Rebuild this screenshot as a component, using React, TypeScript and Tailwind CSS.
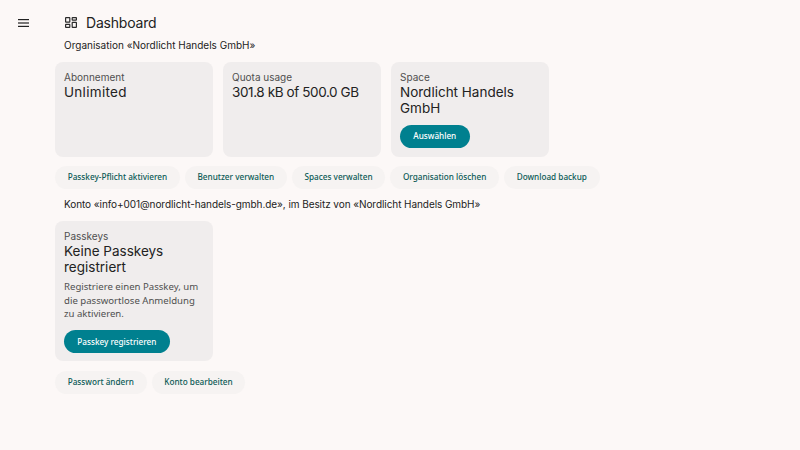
import React from 'react';

const heading = "font-['Inter','Noto_Sans',sans-serif]";
const body = "font-['Noto_Sans','Liberation_Sans',sans-serif]";

const Pill = ({ label }: { label: string }) => (
  <button className={`h-[23px] px-[12.7px] rounded-full bg-[#f6f3f2] text-[8.2px] font-medium text-[#0b5a55] whitespace-nowrap ${body}`}>
    {label}
  </button>
);

const Primary = ({ label }: { label: string }) => (
  <button className={`h-[23px] px-[13.3px] rounded-full bg-[#00808f] text-[8.2px] font-medium text-white whitespace-nowrap ${body}`}>
    {label}
  </button>
);

const Card = ({ label, title, children, titleClass = '' }: { label: string; title: string; children?: React.ReactNode; titleClass?: string }) => (
  <div className="w-[158px] rounded-[8px] bg-[#f0eded] p-[9px] pt-[8px]">
    <div className={`text-[10px] leading-[14px] text-[#4f4f4f] ${heading}`}>{label}</div>
    <div className={`text-[13.5px] leading-[16px] text-[#222] ${heading} ${titleClass}`}>{title}</div>
    {children}
  </div>
);

const MenuIcon = () => (
  <svg width="11" height="8" viewBox="0 0 11 8" fill="#222">
    <rect x="0" y="0" width="11" height="1.2" />
    <rect x="0" y="3.4" width="11" height="1.2" />
    <rect x="0" y="6.8" width="11" height="1.2" />
  </svg>
);

const DashboardIcon = () => (
  <svg width="12" height="11" viewBox="0 0 12 11" fill="none" stroke="#2b2b2b" strokeWidth="1.2">
    <rect x="0.6" y="0.6" width="4.2" height="4.6" rx="0.4" />
    <rect x="7.2" y="0.6" width="4.2" height="2.6" rx="0.4" />
    <rect x="0.6" y="7.4" width="4.2" height="3" rx="0.4" />
    <rect x="7.2" y="5.4" width="4.2" height="5" rx="0.4" />
  </svg>
);

export default function App() {
  return (
    <div className="w-[800px] h-[450px] overflow-hidden bg-[#fcf8f7] flex">
      <div className="w-[55px] pl-[17.5px] pt-[19px]">
        <MenuIcon />
      </div>
      <main className="flex-1">
        <div className="h-[45px] pl-[10px] flex items-center gap-[9px]">
          <DashboardIcon />
          <h1 className={`text-[14px] tracking-[-0.2px] text-[#222] ${heading}`}>Dashboard</h1>
        </div>
        <div className={`pl-[9px] text-[10px] leading-[14px] -mt-[7px] text-[#222] ${heading}`}>
          Organisation «Nordlicht Handels GmbH»
        </div>
        <div className="flex gap-[10px] mt-[10px] h-[95px]">
          <Card label="Abonnement" title="Unlimited" titleClass="tracking-[0.3px]" />
          <Card label="Quota usage" title="301.8 kB of 500.0 GB" titleClass="tracking-[-0.4px]" />
          <Card label="Space" title="Nordlicht Handels GmbH">
            <div className="mt-[5px]">
              <Primary label="Auswählen" />
            </div>
          </Card>
        </div>
        <div className="flex gap-[5px] mt-[9px]">
          <Pill label="Passkey-Pflicht aktivieren" />
          <Pill label="Benutzer verwalten" />
          <Pill label="Spaces verwalten" />
          <Pill label="Organisation löschen" />
          <Pill label="Download backup" />
        </div>
        <div className={`pl-[9px] text-[10px] leading-[14px] tracking-[-0.07px] mt-[8px] text-[#222] ${heading}`}>
          Konto «info+001@nordlicht-handels-gmbh.de», im Besitz von «Nordlicht Handels GmbH»
        </div>
        <div className="flex mt-[10px] h-[140px]">
          <Card label="Passkeys" title="Keine Passkeys registriert">
            <p className={`mt-[5px] text-[9.6px] leading-[13.5px] text-[#4f4f4f] ${body}`}>
              Registriere einen Passkey, um die passwortlose Anmeldung zu aktivieren.
            </p>
            <div className="mt-[6px]">
              <Primary label="Passkey registrieren" />
            </div>
          </Card>
        </div>
        <div className="flex gap-[5px] mt-[10px]">
          <Pill label="Passwort ändern" />
          <Pill label="Konto bearbeiten" />
        </div>
      </main>
    </div>
  );
}
